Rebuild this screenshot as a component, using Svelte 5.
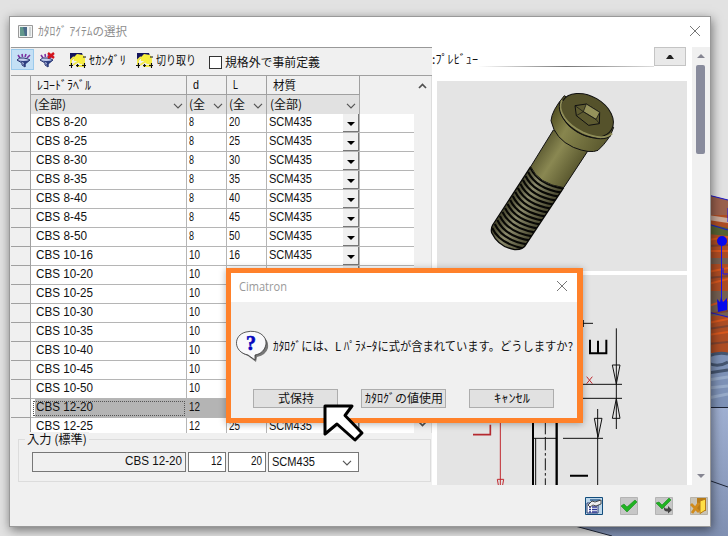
<script>
  const sizes = [
    ['8', '20'], ['8', '25'], ['8', '30'], ['8', '35'], ['8', '40'], ['8', '45'], ['8', '50'],
    ['10', '16'], ['10', ''], ['10', ''], ['10', ''], ['10', ''], ['10', ''],
    ['10', ''], ['10', ''], ['12', ''], ['12', '25']
  ];
  const names = [
    'CBS 8-20', 'CBS 8-25', 'CBS 8-30', 'CBS 8-35', 'CBS 8-40', 'CBS 8-45', 'CBS 8-50',
    'CBS 10-16', 'CBS 10-20', 'CBS 10-25', 'CBS 10-30', 'CBS 10-35', 'CBS 10-40',
    'CBS 10-45', 'CBS 10-50', 'CBS 12-20', 'CBS 12-25'
  ];
  const threads = Array.from({ length: 16 }, (_, i) => i);

  // Condenses or widens a label so that it takes exactly the given width.
  function fit(node, width) {
    const inner = node.firstElementChild;
    const natural = inner.getBoundingClientRect().width;
    node.style.width = width + 'px';
    inner.style.transform = `scaleX(${width / natural})`;
  }
  const isLatin = (text) => /^[\x20-\x7e]+$/.test(text);
</script>

{#snippet label(text, width)}<span class="fit" class:latin={isLatin(text)} use:fit={width}><span>{text}</span></span>{/snippet}

{#snippet chevron()}
  <svg class="chev" width="10" height="6" viewBox="0 0 10 6"><path d="M1 .8 5 4.8 9 .8" fill="none" stroke="#555" stroke-width="1.2" /></svg>
{/snippet}

{#snippet wand()}
  <svg width="17" height="15" viewBox="0 0 17 15">
    <path d="M1 0H13L14 3 8 2 3 7V12H1Z" fill="#14145c" />
    <path d="M5 4 8 1 14 2 16 5V11H11L8 8 5 8Z" fill="#f7ef3d" />
    <path d="M2 13V7L5 4M4 12 10 8M7 13H15M14 4V13" fill="none" stroke="#f3e94a" stroke-width="2" />
    <path d="M0 12.500H4M2.500 10V15M7 12.500H10M8.500 11V14M13 12.500H17M15.500 10V15M14 4H17" stroke="#111" stroke-width="1.1" />
  </svg>
{/snippet}

{#snippet funnel(crossed)}
  <svg width="16" height="17" viewBox="0 0 16 17">
    <path d="M2 3 4 6M6 2 6.500 5M10 2 9 5M14 3 11 6" stroke="#7c30a0" stroke-width="1.6" />
    <path d="M1 8Q3 5 8 6T14 8L9 12V15L6 13V11Z" fill="#c5cfee" stroke="#28336e" />
    <path d="M1 8Q7 10 14 8L9.500 12V15L7 13 8 11Z" fill="#2e3f80" />
    {#if crossed}<path d="M9 1 15 6M15 1 9 6" stroke="#d3141c" stroke-width="2.4" />{/if}
  </svg>
{/snippet}

<div class="desktop">
  <svg class="scene" width="728" height="536" viewBox="0 0 728 536">
    <defs>
      <linearGradient id="sea" x2="0" y2="1"><stop offset="0" stop-color="#a0b0d2" /><stop offset="1" stop-color="#8090b2" /></linearGradient>
    </defs>
    <path d="M575 526 708 407H728V536H612Z" fill="url(#sea)" />
    <path d="M708 195 728 200V360H708Z" fill="#ae4d24" />
    <path d="M708 195 728 200V215H708Z" fill="#99604d" />
    <path d="M708 215 728 218V223L708 220Z" fill="#c9aa9a" />
    <path d="M708 224 728 228V236L708 234Z" fill="#566334" />
    <path d="M708 258H728V264H708ZM708 291H728V316H708Z" fill="#766052" />
    <path d="M708 240 728 237M708 251H728M708 272 728 268M708 284 728 279M708 306 728 300M708 323 728 319M708 335 728 332" stroke="#d9581e" stroke-width="2" />
    <path d="M708 246 728 245M708 278 728 276M708 314 728 311M708 329 728 326M708 344 728 342" stroke="#804431" stroke-width="2" />
    <path d="M708 195 728 200M708 224 728 230M708 312 728 317" stroke="#1a1ad0" />
    <path d="M708 353H728V407H708Z" fill="#7e92b7" />
    <path d="M708 356Q718 352 728 354M708 363Q718 368 728 362M708 373 728 370" stroke="#45556f" stroke-width="3" fill="none" />
    <path d="M708 380 728 377M708 388 728 386M708 398 728 394" stroke="#98abc9" stroke-width="3" />
    <path d="M708 407.500H728M708 480 728 487M575 526 612 536" stroke="#1d2537" fill="none" />
    <path d="M721.500 241V305M728 208V222M723 268V274H728" stroke="#1414f4" fill="none" />
    <circle cx="722" cy="241" r="5" fill="#0909ef" />
    <path d="M717 299 720 302 721 297 723 302 727 298 727 310 718 312Z" fill="#0909ef" />
  </svg>

  <section class="window">
    <header class="titlebar">
      <svg width="15" height="13" viewBox="0 0 15 13"><path d="M.5.500H14.500V12.500H.5Z" fill="#f1f3f3" stroke="#999" /><path d="M2 2H9V11H2Z" fill="#62988c" /><path d="M5 2H9V11H7Z" fill="#4a6a89" /><path d="M11 2H13V11H11Z" fill="#ccd2d3" /></svg>
      {@render label('ｶﾀﾛｸﾞ ｱｲﾃﾑの選択', 89)}
      <svg class="close" width="12" height="12" viewBox="0 0 12 12"><path d="M1 1 11 11M11 1 1 11" stroke="#777" /></svg>
    </header>

    <div class="main">
      <div class="left">
        <div class="toolbar">
          <span class="tool on">{@render funnel(false)}</span>
          <span class="tool">{@render funnel(true)}</span>
          <span class="cmd first">{@render wand()}{@render label('ｾｶﾝﾀﾞﾘ', 37)}</span>
          <span class="cmd second">{@render wand()}{@render label('切り取り', 40)}</span>
          <span class="check"><i></i>{@render label('規格外で事前定義', 95)}</span>
        </div>
        <div class="gridbox">
          <div class="table">
            <div class="row head">
              <span></span><span>{@render label('ﾚｺｰﾄﾞﾗﾍﾞﾙ', 54)}</span><span>{@render label('d', 6)}</span><span>{@render label('L', 5)}</span><span>{@render label('材質', 23)}</span><span></span>
            </div>
            <div class="row filter">
              <span></span>
              <span>{@render label('(全部)', 32)}{@render chevron()}</span>
              <span>{@render label('(全', 16)}{@render chevron()}</span>
              <span>{@render label('(全', 16)}{@render chevron()}</span>
              <span>{@render label('(全部)', 32)}{@render chevron()}</span>
              <span></span>
            </div>
            {#each sizes as [d, l], i}
              <div class="row data" class:selected={i === 15}>
                <span></span>
                <span>{@render label(names[i], d.length === 1 ? 51 : 57)}</span>
                <span>{@render label(d, d.length === 1 ? 5 : 11)}</span>
                <span>{#if l}{@render label(l, 11)}{/if}</span>
                <span>{#if l}{@render label('SCM435', 43)}{/if}<b class="drop"></b></span>
                <span></span>
              </div>
            {/each}
          </div>
          <div class="vscroll">
            <svg width="9" height="6" viewBox="0 0 9 6"><path d="M1 5 4.500 1.500 8 5" fill="none" stroke="#505050" stroke-width="1.7" /></svg>
            <svg width="9" height="6" viewBox="0 0 9 6"><path d="M1 1 4.500 4.500 8 1" fill="none" stroke="#505050" stroke-width="1.7" /></svg>
          </div>
        </div>
        <div class="inputs">
          <div class="group">
            <div class="legend">{@render label('入力 (標準)', 60)}</div>
            <div class="fields">
              <span class="f1">{@render label('CBS 12-20', 57)}</span>
              <span class="f2">{@render label('12', 11)}</span>
              <span class="f2">{@render label('20', 11)}</span>
              <span class="f4">{@render label('SCM435', 43)}{@render chevron()}</span>
            </div>
          </div>
        </div>
      </div>

      <div class="preview">
        <div class="phead">
          <span class="ptitle">{@render label(':ﾌﾟﾚﾋﾞｭｰ', 46)}</span>
          <span class="rule"></span>
          <span class="fold"><svg width="8" height="4" viewBox="0 0 8 4"><path d="M0 4 3 0H5L8 4Z" fill="#222" /></svg></span>
        </div>
        <svg class="pane" width="250" height="190" viewBox="21 3 750 570">
          <defs>
            <linearGradient id="shank" gradientUnits="userSpaceOnUse" x1="335" y1="205" x2="435" y2="270"><stop offset="0" stop-color="#626036" /><stop offset=".4" stop-color="#8a8852" /><stop offset="1" stop-color="#5c5a30" /></linearGradient>
            <linearGradient id="rim" gradientUnits="userSpaceOnUse" x1="365" y1="100" x2="540" y2="200"><stop offset="0" stop-color="#535022" /><stop offset=".3" stop-color="#88864e" /><stop offset="1" stop-color="#55532a" /></linearGradient>
            <linearGradient id="thread" gradientUnits="userSpaceOnUse" x1="245" y1="355" x2="345" y2="415"><stop offset="0" stop-color="#4b4a32" /><stop offset=".35" stop-color="#8b8a6c" /><stop offset="1" stop-color="#45442c" /></linearGradient>
            <clipPath id="threadClip"><path d="M302 260Q325 312 401 323L290 490Q280 510 254 509Q205 500 185 458Q182 445 188 435Z" /></clipPath>
          </defs>
          <path d="M370 150 302 260Q325 312 401 323L474 212Z" fill="url(#shank)" stroke="#111" stroke-width="3" />
          <g clip-path="url(#threadClip)">
            <path d="M180 250H410V520H180Z" fill="url(#thread)" />
            {#each threads as i}
              <path d={`M${302 - i * 7.700} ${264 + i * 12}q24 50 101 62`} fill="none" stroke="#080805" stroke-width="6.500" />
            {/each}
          </g>
          <path d="M302 260 188 435Q182 445 185 458Q205 500 254 509Q280 510 290 490L401 323" fill="none" stroke="#0a0a08" stroke-width="4" />
          <path d="M403 47Q365 92 363 122Q375 177 430 202Q480 222 504 211Q540 178 551 142Z" fill="url(#rim)" stroke="#111" stroke-width="3" />
          <ellipse cx="471" cy="106" rx="85" ry="58" transform="rotate(30 471 106)" fill="#55522b" stroke="#111" stroke-width="3" />
          <path d="M396 61C378 93 411 134 458 157C500 176 534 176 546 160" fill="none" stroke="#8f8d58" stroke-width="6" />
          <path d="M390 65C378 105 418 146 463 166C500 180 530 179 543 167" fill="none" stroke="#111" stroke-width="3" />
          <path d="M435 77 469 72 509 97 508 131 476 136 439 107Z" fill="#5d5a30" stroke="#111" stroke-width="3" />
          <path d="M469 72 509 97 498 118 460 95Z" fill="#95925b" stroke="#111" stroke-width="2" />
          <path d="M439 107 460 95 498 118 508 131M460 95 435 77" fill="none" stroke="#111" stroke-width="2" />
        </svg>
        <svg class="pane" width="250" height="210" viewBox="21 -75 750 630">
          <g fill="none" stroke="#111" stroke-width="3">
            <path d="M440 70H489M460 60V81M559 85V387M430 253H576M430 295H576M547 195H570L559 252ZM547 355H570L559 296Z" />
            <path d="M503 327V555M399 415H519M493 355H516L504 412ZM308 415H380M317 415V555" />
            <path d="M346 367V415M346 415V555" stroke-dasharray="36 8 8 8" />
          </g>
          <path d="M309 367V555" stroke="#000" stroke-width="6" />
          <path d="M380 367V555" stroke="#000" stroke-width="7" />
          <path d="M480 119V160H529V119M504 122V160M420 527H474" fill="none" stroke="#000" stroke-width="6" />
          <path d="M129 404H181V374" fill="none" stroke="#b52a30" stroke-width="5" />
          <path d="M211 367V555M202 538H221L218 555M202 538 205 555M470 230 487 251M487 230 470 251" fill="none" stroke="#c0282e" stroke-width="3" />
        </svg>
      </div>

      <div class="side">
        <svg width="8" height="4" viewBox="0 0 8 4"><path d="M0 4 4 0 8 4Z" fill="#858591" /></svg>
        <div class="thumb"></div>
        <svg width="8" height="4" viewBox="0 0 8 4"><path d="M0 0H8L4 4Z" fill="#858591" /></svg>
      </div>
    </div>

    <footer class="actions">
      <svg width="18" height="18" viewBox="0 0 18 18"><path d="M.5.500H17.500V17.500H.5Z" fill="#bdd7ea" stroke="#124c7c" /><path d="M2 6H13V16H2Z" fill="#fff" stroke="#26386f" /><path d="M4 12.500H6M7 12.500H12M4 15H6M7 15H12M4 10H6M7 10H12" stroke="#2f3995" stroke-width="1.300" /><path d="M5 2H15V4H5Z" fill="#557ea7" /><path d="M3 8 7 4 10 5 16 3V7L11 9 8 8 5 10Z" fill="#eee" stroke="#222" stroke-width=".8" /></svg>
      <svg width="18" height="18" viewBox="0 0 18 18"><path d="M.5.500H17.500V17.500H.5Z" fill="#c7c7c7" stroke="#b4b4b4" /><path d="M1 9 4 7 7 10 15 3 17 5 7 15Z" fill="#20b321" stroke="#158c1b" stroke-width=".6" /></svg>
      <svg width="18" height="18" viewBox="0 0 18 18"><path d="M.5.500H17.500V17.500H.5Z" fill="#c7c7c7" stroke="#b4b4b4" /><path d="M1 6 4 5 7 8 14 1 16 3 7 12Z" fill="#20b321" stroke="#158c1b" stroke-width=".6" /><path d="M9 9Q9 12 13 11.500V9L17 13 13 16.500V14.500Q8 15 9 9Z" fill="#444" /></svg>
      <svg width="18" height="18" viewBox="0 0 18 18"><path d="M.5.500H17.500V17.500H.5Z" fill="#c9c4b8" stroke="#b8b3a8" /><path d="M7 1H16V14H7Z" fill="#b77a16" /><path d="M10 4 15.500 2V13L10 16.500Z" fill="#ffdf45" stroke="#b77a16" /><path d="M1 7 9 15M9 6 2 16" stroke="#d18b1c" stroke-width="2.800" /></svg>
    </footer>
  </section>

  <section class="dialog">
    <header><span class="name">{@render label('Cimatron', 48)}</span><svg width="12" height="12" viewBox="0 0 12 12"><path d="M1 1 11 11M11 1 1 11" stroke="#777" /></svg></header>
    <div class="message">
      <svg width="33" height="33" viewBox="0 0 33 33">
        <path d="M21 27 20 32 12 26Q3 23 2 17H5Q8 4 27 7Q33 10 32 18Q30 25 21 27Z" fill="#777" />
        <path d="M19 30 12 25C-3 22-3 5 10 2C22-1 31 6 30 14C29 20 25 24 19 25Z" fill="#f9f9fb" stroke="#333" stroke-width=".8" />
        <text x="10" y="20" font-family="Liberation Serif, serif" font-size="20" font-weight="700" fill="#0505bd" stroke="#0505bd" stroke-width=".6">?</text>
      </svg>
      {@render label('ｶﾀﾛｸﾞには、L ﾊﾟﾗﾒｰﾀに式が含まれています。どうしますか?', 300)}
    </div>
    <div class="buttons">
      <button>{@render label('式保持', 36)}</button>
      <button>{@render label('ｶﾀﾛｸﾞの値使用', 78)}</button>
      <button>{@render label('ｷｬﾝｾﾙ', 36)}</button>
    </div>
  </section>

  <svg class="pointer" width="44" height="42" viewBox="0 0 44 42"><path d="M4 4H31L24 13.500 41 31 34 38 16 22 4 32Z" fill="#fff" stroke="#000" stroke-width="3" stroke-linejoin="round" /></svg>
</div>

<style>
  :global(body) { overflow: hidden; }
  .desktop { position: relative; width: 728px; height: 536px; overflow: hidden; background: #e2e2e2; font: 12px/18px "Noto Sans CJK JP", sans-serif; color: #111; }
  .desktop * { box-sizing: border-box; }
  .scene { position: absolute; left: 0; top: 0; }
  svg { display: block; flex: none; }
  .fit { display: inline-block; flex: none; white-space: pre; text-align: left; }
  .fit > span { display: inline-block; transform-origin: 0 50%; }
  .latin { font-family: "Liberation Sans", sans-serif; }

  .window { position: absolute; left: 9px; top: 16px; width: 702px; height: 511px; display: flex; flex-direction: column; border: 1px solid #999; background: #f0f0f0; box-shadow: 1px 3px 10px rgba(0, 0, 0, .5); padding-left: 1px; }
  .titlebar { height: 30px; margin-left: -1px; flex: none; display: flex; align-items: center; gap: 5px; padding: 0 9px 2px 8px; background: #fff; color: #8e8e8e; }
  .titlebar .close { margin-left: auto; }
  .main { display: flex; height: 438px; flex: none; }
  .left { width: 421px; display: flex; flex-direction: column; }
  .toolbar { height: 29px; flex: none; display: flex; align-items: flex-start; border-top: 1px solid #999; border-bottom: 1px solid #a0a0a0; }
  .tool { width: 23px; height: 21px; padding: 3px 0 0 5px; margin-top: 1px; }
  .tool.on { background: #c4e0f5; outline: 1px solid #9bcaec; outline-offset: -1px; }
  .cmd { display: flex; align-items: center; gap: 3px; margin-top: 3px; }
  .first { margin-left: 12px; }
  .second { margin-left: 10px; }
  .check { display: flex; align-items: center; gap: 3px; margin: 5px 0 0 13px; }
  .check i { width: 13px; height: 13px; border: 1px solid #333; background: #fff; }

  .gridbox { height: 357px; flex: none; display: flex; overflow: hidden; }
  .table { width: 403px; height: 357px; overflow: hidden; background: #fff; }
  .row { display: grid; grid-template-columns: 20px 156px 40px 40px 93px 54px; height: 19px; }
  .row > span { display: flex; align-items: center; height: 19px; border-right: 1px solid #b5b5b5; border-bottom: 1px solid #b5b5b5; padding-left: 2px; min-width: 0; }
  .data .fit { line-height: 16px; margin-bottom: 2px; height: 16px; }
  .row > span:nth-child(1) { background: #f0f0f0; border-color: #a0a0a0; }
  .row > span:nth-child(2) { padding-left: 5px; }
  .row > span:last-child { border-right: 0; }
  .head > span { background: #f0f0f0; border-color: #a0a0a0; padding-left: 6px; }
  .row.head > span:nth-child(2) { padding-left: 6px; }
  .head > span:last-child, .filter > span:last-child { background: #f0f0f0; border: 0; }
  .head > span:first-child { border-bottom: 0; }
  .filter > span { background: #e1e1e1; border-color: #a8a8a8; border-bottom: 0; }
  .filter .fit { margin-bottom: 2px; }
  .row.filter > span:nth-child(2), .filter > span:nth-child(5) { padding-left: 3px; }
  .chev { margin: 2px 3px 0 auto; }
  .selected > span:not(:first-child) { background: #b4b4b4; }
  .selected > span:nth-child(2) { outline: 1px dotted #555; outline-offset: -3px; box-shadow: inset 4px 0 #fff; }
  .drop { width: 16px; height: 18px; margin-left: auto; background: #f0f0f0; border: solid #777; border-width: 0 1px 1px 0; position: relative; }
  .drop::after { content: ""; position: absolute; left: 4px; top: 8px; border: 4px solid transparent; border-top-color: #000; border-bottom: 0; }
  .vscroll { width: 18px; display: flex; flex-direction: column; justify-content: space-between; align-items: center; padding: 7px 0 6px; background: #f0f0f0; border-right: 1px solid #ddd; }

  .inputs { flex: 1; padding: 6px 1px 3px 7px; }
  .group { height: 43px; border: 1px solid #dcdcdc; }
  .legend { width: 64px; height: 13px; margin: -8px 0 0 6px; padding-left: 2px; line-height: 13px; background: #f0f0f0; }
  .fields { display: flex; gap: 2px; padding: 7px 0 0 13px; }
  .fields > span { display: flex; align-items: center; justify-content: flex-end; height: 20px; padding: 0 3px 3px; background: #fff; border: 1px solid #777; }
  .f1.f1 { width: 154px; background: #f0f0f0; }
  .f2 { width: 38px; }
  .fields .f4 { width: 91px; justify-content: flex-start; padding-bottom: 0; }

  .preview { width: 260px; display: flex; flex-direction: column; background: #fff; padding-left: 5px; }
  .phead { height: 34px; flex: none; display: flex; align-items: flex-start; padding-right: 6px; }
  .ptitle { margin: 3px 0 0 -5px; }
  .rule { flex: 1; height: 1px; margin-top: 19px; background: linear-gradient(90deg, #fff, #777 50%, #ddd); }
  .fold { width: 32px; height: 19px; display: flex; align-items: center; justify-content: center; border: 1px solid #c4c4c4; background: #e9e9e9; }
  .pane { background: #e4e4e4; margin-bottom: 4px; }
  .side { flex: 1; display: flex; flex-direction: column; align-items: center; background: #f0f0f0; padding: 7px 1px 7px 0; }
  .thumb { width: 9px; height: 89px; margin: 7px 0 auto; border-radius: 2px; background: #888b9c; }
  .actions { flex: 1; display: flex; align-items: flex-start; justify-content: flex-end; gap: 17px; padding: 12px 2px 0 0; }

  .dialog { position: absolute; left: 226px; top: 268px; width: 357px; height: 155px; display: flex; flex-direction: column; border: 5px solid #ff812a; border-right-width: 6px; background: #f0f0f0; box-shadow: 0 1px 7px rgba(0, 0, 0, .3); }
  .dialog header { height: 29px; flex: none; display: flex; align-items: center; justify-content: space-between; padding: 0 9px 3px 8px; background: #fff; color: #999; }
  .name .latin { font-family: "Open Sans", sans-serif; }
  .message { height: 87px; display: flex; align-items: center; gap: 4px; padding: 2px 0 0 5px; }
  .message .fit { margin-bottom: 2px; }
  .buttons { display: flex; gap: 23px; padding-left: 22px; }
  button { width: 85px; height: 19px; display: flex; align-items: center; justify-content: center; padding: 0 0 2px; border: 1px solid #adadad; background: #e1e1e1; font: inherit; color: #111; }
  .pointer { position: absolute; left: 321px; top: 402px; }
</style>
